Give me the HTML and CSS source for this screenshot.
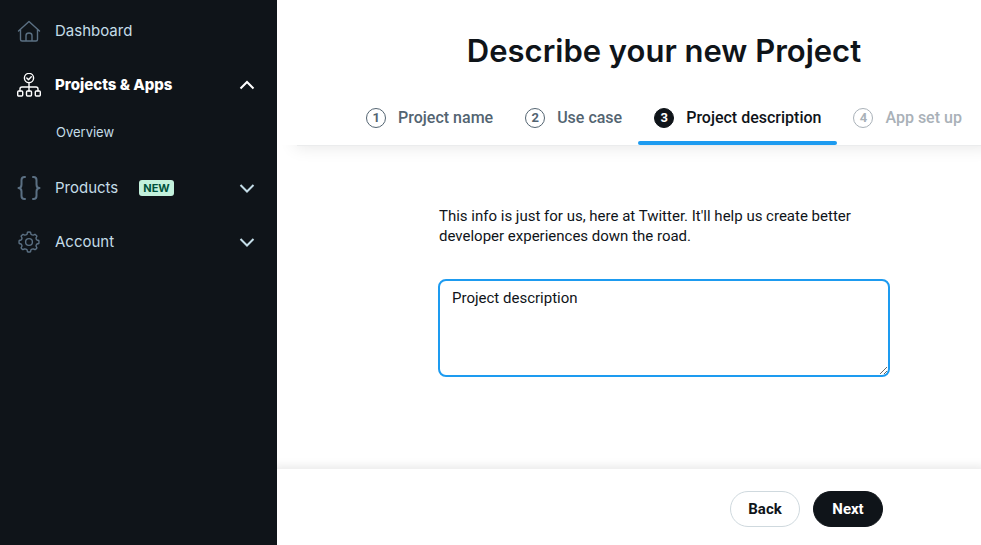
FILE: index.html
```html
<!DOCTYPE html>
<html lang="en">
<head>
<meta charset="UTF-8">
<meta name="viewport" content="width=device-width, initial-scale=1.0">
<title>Describe your new Project</title>
<link rel="stylesheet" href="styles.css">
</head>
<body>
<div class="layout">
    <nav class="sidebar">
        <a class="nav-item" href="#">
            <svg class="nav-icon" viewBox="0 0 24 24">
                <path d="M1.500 12 L12 2.500 L22.500 12 M3.500 10.500 V20.500 Q3.500 22 5 22 H19 Q20.500 22 20.500 20.500 V10.500 M9 22 V16.500 Q9 14 12 14 Q15 14 15 16.500 V22"/>
            </svg>
            <span>Dashboard</span>
        </a>
        <button class="nav-item active" type="button" aria-expanded="true">
            <svg class="nav-icon" viewBox="0 0 24 24">
                <circle cx="12" cy="5" r="4.600"/>
                <path d="M9.800 5 L11.500 6.700 L14.300 3.700 M12 9.600 V18 M3 18 V16 Q3 14 5 14 H19 Q21 14 21 16 V18"/>
                <rect x="0.700" y="18" width="5" height="5" rx="1"/>
                <rect x="9.500" y="18" width="5" height="5" rx="1"/>
                <rect x="18.300" y="18" width="5" height="5" rx="1"/>
            </svg>
            <span>Projects &amp; Apps</span>
            <svg class="chevron" viewBox="0 0 16 10"><path d="M1.500 8.500 L8 2 L14.500 8.500"/></svg>
        </button>
        <a class="sub-item" href="#">Overview</a>
        <button class="nav-item" type="button" aria-expanded="false">
            <svg class="nav-icon braces" viewBox="0 0 24 24">
                <path d="M8 1 H7.500 Q4.500 1 4.500 4 V8.500 Q4.500 12 1.500 12 Q4.500 12 4.500 15.500 V20 Q4.500 23 7.500 23 H8 M16 1 H16.500 Q19.500 1 19.500 4 V8.500 Q19.500 12 22.500 12 Q19.500 12 19.500 15.500 V20 Q19.500 23 16.500 23 H16"/>
            </svg>
            <span>Products</span>
            <span class="badge">NEW</span>
            <svg class="chevron" viewBox="0 0 16 10"><path d="M1.500 2 L8 8.500 L14.500 2"/></svg>
        </button>
        <button class="nav-item" type="button" aria-expanded="false">
            <svg class="nav-icon" viewBox="0 0 24 24">
                <circle cx="12" cy="12" r="3.400"/>
                <path d="M10.500 2.200 Q12 1.800 13.500 2.200 L14 4.300 Q15 5.200 16.300 5.100 L18 4.300 Q19.200 5 19.900 6.200 L19 8 Q19 9.300 19.900 10 L21.800 10.500 Q22.200 12 21.800 13.500 L19.900 14 Q19 14.800 19 16 L19.900 17.800 Q19.200 19 18 19.700 L16.300 18.900 Q15 18.800 14 19.700 L13.500 21.800 Q12 22.200 10.500 21.800 L10 19.700 Q9 18.800 7.700 18.900 L6 19.700 Q4.800 19 4.100 17.800 L5 16 Q5 14.800 4.100 14 L2.200 13.500 Q1.800 12 2.200 10.500 L4.100 10 Q5 9.300 5 8 L4.100 6.200 Q4.800 5 6 4.300 L7.700 5.100 Q9 5.200 10 4.300 Z"/>
            </svg>
            <span>Account</span>
            <svg class="chevron" viewBox="0 0 16 10"><path d="M1.500 2 L8 8.500 L14.500 2"/></svg>
        </button>
    </nav>

    <div class="main">
        <header class="header">
            <h1>Describe your new Project</h1>
            <ol class="steps">
                <li class="step"><span class="number">1</span>Project name</li>
                <li class="step"><span class="number">2</span>Use case</li>
                <li class="step current" aria-current="step"><span class="number">3</span>Project description</li>
                <li class="step disabled"><span class="number">4</span>App set up</li>
            </ol>
        </header>

        <main class="content">
            <form class="form" id="project-form">
                <label for="description">This info is just for us, here at Twitter. It'll help us create better developer experiences down the road.</label>
                <textarea id="description">Project description</textarea>
            </form>
        </main>

        <footer class="footer">
            <div class="actions">
                <button class="button" type="button">Back</button>
                <button class="button primary" type="submit" form="project-form">Next</button>
            </div>
        </footer>
    </div>
</div>
</body>
</html>
```

FILE: styles.css
```css
* {
    box-sizing: border-box;
}

body {
    margin: 0;
    font-family: Roboto, "Liberation Sans", sans-serif;
    font-size: 15px;
    line-height: 20px;
    color: #0f1419;
    background: white;
}

button, textarea {
    font: inherit;
}

.layout {
    display: flex;
    min-height: 100vh;
}

/* Sidebar */
.sidebar {
    flex: none;
    width: 277px;
    padding: 4px 0;
    background: #0f1419;
    font-family: Inter, sans-serif;
}

.nav-item {
    display: flex;
    align-items: center;
    width: 100%;
    height: 54px;
    padding: 0 22px 0 17px;
    border: none;
    background: none;
    color: #c4dde8;
    text-decoration: none;
    cursor: pointer;
}

.nav-item.active {
    color: white;
    font-weight: 800;
}

.nav-icon {
    width: 24px;
    height: 24px;
    margin-right: 14px;
    fill: none;
    stroke: #5b7083;
    stroke-width: 1.4;
    stroke-linecap: round;
    stroke-linejoin: round;
}

.braces {
    stroke-width: 2;
}

.active .nav-icon {
    stroke: white;
}

.chevron {
    width: 16px;
    height: 10px;
    margin-left: auto;
    fill: none;
    stroke: currentColor;
    stroke-width: 2;
}

.sub-item {
    display: block;
    margin-bottom: 9px;
    padding: 10px 0 10px 56px;
    color: #c4dde8;
    font-size: 13px;
    text-decoration: none;
}

.badge {
    margin-left: 21px;
    padding: 0 4px;
    border-radius: 3px;
    background: #c3f1dc;
    color: #00513a;
    font-size: 11px;
    font-weight: 700;
    line-height: 16px;
}

/* Main column */
.main {
    display: flex;
    flex: 1;
    flex-direction: column;
    min-width: 0;
}

.header {
    padding: 32px 0 0 70px;
    box-shadow: 20px 1px 0 #ebeced, 14px 6px 16px -4px rgba(0, 0, 0, 0.1);
}

h1 {
    margin: 0;
    font-family: Inter, sans-serif;
    font-size: 31px;
    font-weight: 600;
    line-height: 38px;
    text-align: center;
}

.steps {
    display: flex;
    justify-content: center;
    margin: 20px 0 0;
    padding: 0;
    list-style: none;
    white-space: nowrap;
}

.step {
    display: flex;
    align-items: center;
    gap: 12px;
    height: 55px;
    padding: 0 16px;
    color: #536471;
    font-size: 16px;
    font-weight: 500;
}

.number {
    width: 20px;
    height: 20px;
    border: 1px solid #536471;
    border-radius: 50%;
    font-size: 13px;
    font-weight: 700;
    line-height: 18px;
    text-align: center;
}

.current {
    position: relative;
    color: #0f1419;
}

.current::after {
    content: "";
    position: absolute;
    left: 0;
    right: 0;
    bottom: 0;
    height: 4px;
    border-radius: 2px;
    background: #1d9bf0;
}

.current .number {
    border-color: #0f1419;
    background: #0f1419;
    color: white;
}

.disabled {
    color: #a9b1b8;
}

.disabled .number {
    border-color: #a9b1b8;
}

.content {
    flex: 1;
    padding: 61px 0 40px 70px;
}

.form {
    max-width: 452px;
    margin: 0 auto;
}

.form label {
    display: block;
    padding: 0 1px;
}

.form textarea {
    display: block;
    width: 100%;
    height: 98px;
    margin-top: 33px;
    padding: 7px 12px;
    border: 2px solid #1d9bf0;
    border-radius: 8px;
    outline: none;
    color: #0f1419;
    resize: vertical;
}

.footer {
    padding: 22px 0 18px 70px;
    box-shadow: 0 4px 10px 6px rgba(0, 0, 0, 0.1);
    clip-path: inset(-16px 0 0 0);
}

.actions {
    display: flex;
    justify-content: flex-end;
    gap: 13px;
    max-width: 438px;
    margin: 0 auto;
}

.button {
    width: 70px;
    height: 36px;
    padding: 0;
    border: 1px solid #cfd9de;
    border-radius: 18px;
    background: white;
    color: #0f1419;
    font-weight: 700;
    cursor: pointer;
}

.primary {
    border-color: #0f1419;
    background: #0f1419;
    color: white;
}
```
